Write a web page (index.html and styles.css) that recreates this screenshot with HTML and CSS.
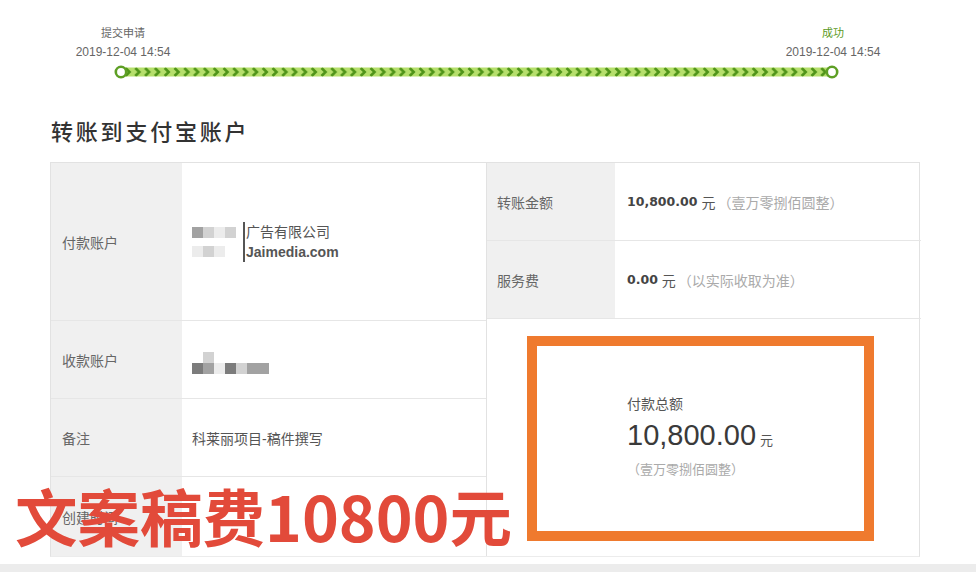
FILE: index.html
```html
<!DOCTYPE html>
<html lang="zh-CN">

<head>
    <meta charset="UTF-8">
    <meta name="viewport" content="width=device-width, initial-scale=1.0">
    <title>转账到支付宝账户</title>
    <link rel="stylesheet" href="styles.css">
</head>

<body>
    <div class="page">
        <div class="timeline">
            <div class="steps">
                <div class="step">
                    <div class="step-name">提交申请</div>
                    <div class="step-time">2019-12-04 14:54</div>
                </div>
                <div class="step done">
                    <div class="step-name">成功</div>
                    <div class="step-time">2019-12-04 14:54</div>
                </div>
            </div>
            <svg class="track" width="727" height="16" viewBox="0 0 727 16">
                <defs>
                    <pattern id="chevrons" x="10" y="0" width="9.8" height="16" patternUnits="userSpaceOnUse">
                        <path d="M2.5 4 L6.5 8 L2.5 12" fill="none" stroke="#4f9419" stroke-width="2.6" />
                    </pattern>
                </defs>
                <rect x="8" y="3.5" width="711" height="9" fill="#b6df6c" />
                <rect x="12" y="3.5" width="703" height="9" fill="url(#chevrons)" />
                <circle cx="8" cy="8" r="5.2" fill="#fff" stroke="#5e9f25" stroke-width="2.6" />
                <circle cx="719" cy="8" r="5.2" fill="#fff" stroke="#5e9f25" stroke-width="2.6" />
            </svg>
        </div>

        <h2 class="title">转账到支付宝账户</h2>

        <div class="detail">
            <div class="detail-col col-left">
                <div class="row row-payer">
                    <div class="label">付款账户</div>
                    <div class="value">
                        <div class="mosaic">
                            <div class="mosaic-line">
                                <span class="px px-mid"></span><span class="px px-light"></span><span class="px px-faint"></span><span class="px px-light"></span>
                            </div>
                            <div class="mosaic-line">
                                <span class="px px-faint"></span><span class="px px-light"></span><span class="px px-faint"></span>
                            </div>
                        </div>
                        <div class="payer-text">
                            <div class="payer-name">广告有限公司</div>
                            <div class="payer-mail">Jaimedia.com</div>
                        </div>
                    </div>
                </div>
                <div class="row">
                    <div class="label">收款账户</div>
                    <div class="value">
                        <div class="mosaic mosaic-payee">
                            <div class="mosaic-line mosaic-top">
                                <span class="px px-blank"></span><span class="px px-light"></span>
                            </div>
                            <div class="mosaic-line">
                                <span class="px px-dark"></span><span class="px px-mid"></span><span class="px px-faint"></span><span class="px px-dark"></span><span class="px px-light"></span><span class="px px-mid wide"></span>
                            </div>
                        </div>
                    </div>
                </div>
                <div class="row">
                    <div class="label">备注</div>
                    <div class="value">科莱丽项目-稿件撰写</div>
                </div>
                <div class="row row-last">
                    <div class="label">创建时间</div>
                    <div class="value"></div>
                </div>
            </div>

            <div class="detail-col col-right">
                <div class="row">
                    <div class="label">转账金额</div>
                    <div class="value"><b class="num">10,800.00</b> 元 <span class="note">（壹万零捌佰圆整）</span></div>
                </div>
                <div class="row">
                    <div class="label">服务费</div>
                    <div class="value"><b class="num">0.00</b> 元 <span class="note">（以实际收取为准）</span></div>
                </div>
                <div class="total-cell">
                    <div class="total-box">
                        <div class="total-label">付款总额</div>
                        <div class="total-amount">10,800.00<span class="total-unit">元</span></div>
                        <div class="note">（壹万零捌佰圆整）</div>
                    </div>
                </div>
            </div>
        </div>

        <div class="stamp">文案稿费10800元</div>
    </div>
    <div class="footer-bar"></div>
</body>

</html>
```

FILE: styles.css
```css
* {
    box-sizing: border-box;
}

body {
    margin: 0;
    background: #fff;
    color: #555;
    font-family: "Liberation Sans", "Noto Sans CJK SC", sans-serif;
    font-size: 14px;
}

.page {
    position: relative;
    height: 564px;
    padding-top: 24px;
}

/* progress line */
.timeline {
    margin-left: 73px;
    width: 810px;
}

.steps {
    display: flex;
    justify-content: space-between;
}

.step {
    width: 100px;
    text-align: center;
    color: #666;
    line-height: 19px;
}

.step-name {
    font-size: 11px;
}

.step-time {
    font-size: 12px;
}

.step.done .step-name {
    color: #5b9a1e;
}

.track {
    display: block;
    margin: 2px 0 0 40px;
}

.title {
    margin: 38px 0 14px 51px;
    font-size: 22px;
    line-height: 30px;
    font-weight: 500;
    letter-spacing: 2.8px;
    color: #333;
}

/* detail table */
.detail {
    margin-left: 50px;
    width: 870px;
    height: 395px;
    display: grid;
    grid-template-columns: 436px 434px;
    border: 1px solid #e2e2e2;
    border-bottom-color: #ececec;
}

.detail-col {
    display: flex;
    flex-direction: column;
}

.col-left {
    border-right: 1px solid #e2e2e2;
}

.row {
    display: flex;
    height: 78px;
    border-bottom: 1px solid #e6e6e6;
}

.row-payer {
    height: 158px;
}

.row-last {
    flex: 1;
    border-bottom: none;
}

.label {
    display: flex;
    align-items: center;
    padding-left: 11px;
    background: #f0f0f0;
    color: #666;
}

.col-left .label {
    width: 131px;
}

.col-right .label {
    width: 128px;
    padding-left: 10px;
}

.value {
    flex: 1;
    display: flex;
    align-items: center;
    padding-left: 10px;
    color: #555;
}

.col-right .value {
    padding-left: 12px;
}

.num {
    font-family: "DejaVu Sans", sans-serif;
    font-size: 12.5px;
    color: #444;
    margin-right: 4px;
}

.note {
    color: #aaa;
    margin-left: 2px;
}

/* blurred account names */
.mosaic {
    display: flex;
    flex-direction: column;
    gap: 8px;
    width: 51px;
}

.mosaic-line {
    display: flex;
}

.px {
    display: block;
    width: 11px;
    height: 11px;
}

.px.wide {
    width: 22px;
}

.px-dark {
    background: #7c7c7c;
}

.px-mid {
    background: #a2a2a2;
}

.px-light {
    background: #d2d2d2;
}

.px-faint {
    background: #ececec;
}

.px-blank {
    background: transparent;
}

.mosaic-payee {
    gap: 0;
    width: auto;
    margin-top: 6px;
}

.payer-text {
    border-left: 2px solid #555;
    padding-left: 1px;
    line-height: 20px;
}

.payer-name {
    color: #555;
}

.payer-mail {
    font-weight: bold;
    color: #555;
}

/* total */
.total-cell {
    flex: 1;
    padding: 17px 47px 15px 40px;
}

.total-box {
    height: 100%;
    border: 10px solid #ef7a2e;
    padding: 48px 0 0 90px;
}

.total-label {
    line-height: 20px;
    color: #555;
}

.total-amount {
    font-size: 29px;
    line-height: 38px;
    color: #3a3a3a;
    margin-top: 2px;
}

.total-unit {
    font-size: 13px;
    margin-left: 4px;
    color: #555;
}

.total-box .note {
    font-size: 13px;
    margin-left: 0;
    line-height: 20px;
}

/* annotation over the screenshot */
.stamp {
    position: absolute;
    left: 15px;
    top: 484px;
    font-family: "Noto Sans CJK SC", sans-serif;
    font-size: 62.5px;
    line-height: 62px;
    font-weight: bold;
    color: #e24a3a;
    white-space: nowrap;
}

.footer-bar {
    height: 8px;
    background: #ececec;
}
```
